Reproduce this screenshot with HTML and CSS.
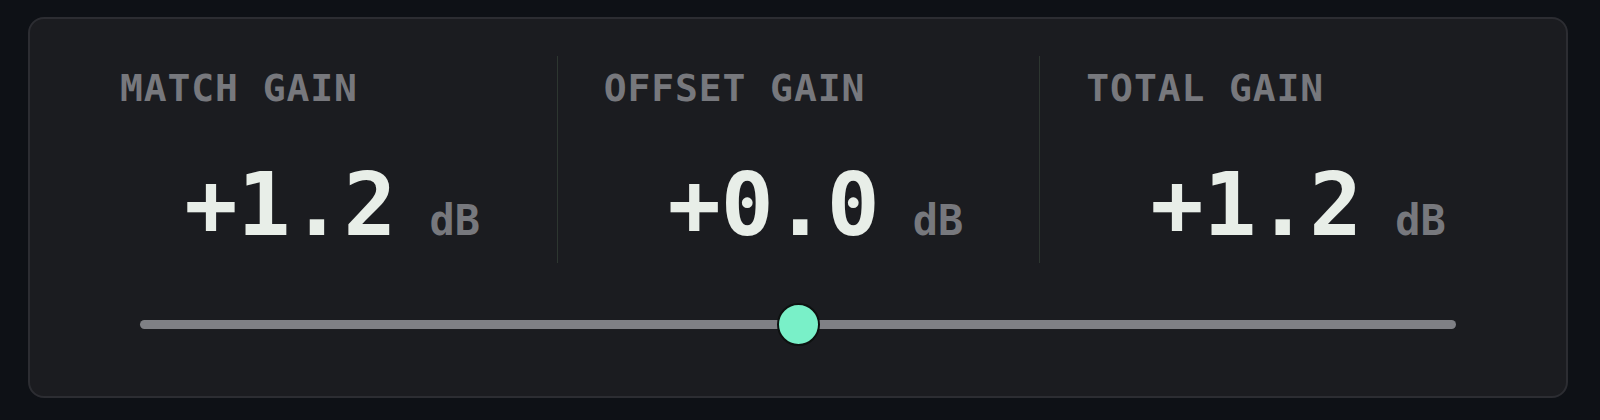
FILE: index.html
```html
<!DOCTYPE html>
<html lang="en">
<head>
<meta charset="utf-8">
<title>Gain</title>
<link rel="stylesheet" href="styles.css">
</head>
<body>
<div class="page">
  <section class="card">
    <div class="readouts">
      <div class="readout">
        <div class="label">MATCH GAIN</div>
        <div class="value"><span class="num">+1.2</span><span class="unit">dB</span></div>
      </div>
      <div class="readout">
        <div class="label">OFFSET GAIN</div>
        <div class="value"><span class="num">+0.0</span><span class="unit">dB</span></div>
      </div>
      <div class="readout">
        <div class="label">TOTAL GAIN</div>
        <div class="value"><span class="num">+1.2</span><span class="unit">dB</span></div>
      </div>
    </div>
    <div class="slider">
      <div class="track"></div>
      <div class="thumb" style="left: 50%"></div>
    </div>
  </section>
</div>
</body>
</html>
```

FILE: styles.css
```css
html, body {
  margin: 0;
  padding: 0;
  background: #0e1116;
}

body {
  font-family: "DejaVu Sans Mono", "Liberation Mono", monospace;
}

.page {
  padding: 17px 32px 22px 28px;
}

.card {
  box-sizing: border-box;
  height: 381px;
  background: #1b1c20;
  border: 2px solid #2c2d32;
  border-radius: 16px;
  padding: 37px 44px 0 44px;
}

.readouts {
  display: grid;
  grid-template-columns: repeat(3, 1fr);
}

.readout {
  height: 207px;
  box-sizing: border-box;
  padding: 13px 16px 14px 46px;
}

.readout + .readout {
  border-left: 1px solid #2d3630;
}

.label {
  font-size: 38px;
  line-height: 1;
  font-weight: bold;
  color: #77787d;
  letter-spacing: 0.9px;
  white-space: nowrap;
  margin-bottom: 54px;
}

.value {
  display: flex;
  justify-content: center;
  align-items: baseline;
  line-height: 1;
  white-space: nowrap;
  padding-left: 4px;
}

.num {
  font-size: 88px;
  font-weight: bold;
  color: #e8eee8;
}

.unit {
  font-size: 42px;
  font-weight: bold;
  color: #77787d;
  margin-left: 33px;
}

.slider {
  position: relative;
  height: 43px;
  margin: 40px 66px 0 66px;
  display: flex;
  align-items: center;
}

.track {
  flex: 1;
  height: 9px;
  border-radius: 5px;
  background: #7f8085;
}

.thumb {
  position: absolute;
  top: 0;
  width: 39px;
  height: 39px;
  margin-left: -21.5px;
  border-radius: 50%;
  background: #79f0c8;
  border: 2px solid #0d1110;
}
```
